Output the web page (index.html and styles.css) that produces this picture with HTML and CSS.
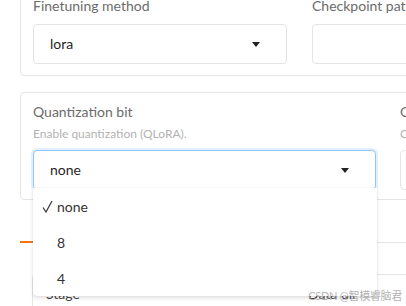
FILE: index.html
```html
<!DOCTYPE html>
<html lang="en">
<head>
    <meta charset="UTF-8">
    <meta name="viewport" content="width=device-width, initial-scale=1.0">
    <title>Quantization settings</title>
    <link rel="stylesheet" href="styles.css">
</head>
<body>
    <div id="page">
        <section class="panel panel-method">
            <div class="col col-method">
                <label class="lbl">Finetuning method</label>
                <div class="select"><span class="value">lora</span><i class="caret"></i></div>
            </div>
            <div class="col col-ckpt">
                <label class="lbl">Checkpoint path</label>
                <div class="select"></div>
            </div>
        </section>

        <section class="panel panel-quant">
            <div class="col col-bit">
                <label class="lbl">Quantization bit</label>
                <p class="info">Enable quantization (QLoRA).</p>
                <div class="select-wrap">
                    <div class="select focused"><span class="value">none</span><i class="caret"></i></div>
                    <ul class="options">
                        <li class="selected">
                            <span class="check"><svg width="11" height="13" viewBox="0 0 11 13"><path d="M1 7.5 L4 12 L10 1" fill="none" stroke="#333" stroke-width="1.2"/></svg></span>none
                        </li>
                        <li><span class="check"></span>8</li>
                        <li><span class="check"></span>4</li>
                    </ul>
                </div>
            </div>
            <div class="col col-qmethod">
                <label class="lbl">Quantization method</label>
                <p class="info">Quantization algorithm to use.</p>
                <div class="select"></div>
            </div>
        </section>

        <nav class="tabs">
            <button class="tab active">Train</button>
            <button class="tab">Evaluate &amp; Predict</button>
        </nav>

        <section class="panel panel-stage">
            <div class="col col-stage"><label class="lbl">Stage</label></div>
            <div class="col col-data"><label class="lbl">Data dir</label></div>
        </section>
    </div>
    <div id="marca">CSDN @智模睿脑君</div>
</body>
</html>
```
FILE: styles.css
```css
*{
    margin: 0;
    padding: 0;
    box-sizing: border-box;
}
:root{
    --borda:#e5e5e5;
    --rotulo:#6b6b6b;
    --dica:#b3b3b3;
    --texto:#1f1f1f;
    --laranja:#f97316;
    --foco:#93c5fd;
}
html, body{
    background-color: white;
    overflow: hidden;
    height: 100%;
}
body{
    font-family: Lato, "Noto Sans", sans-serif;
    font-size: 14px;
    color: var(--texto);
}
#page{
    width: 900px;
    margin-left: 20px;
    margin-top: -14px;
}
.panel{
    display: flex;
    border: 1px solid var(--borda);
    border-radius: 4px;
    padding: 9px 12px 11px;
    background-color: white;
}
.col{
    display: flex;
    flex-direction: column;
    flex: none;
}
.lbl{
    display: block;
    color: var(--rotulo);
    line-height: 20px;
}
.info{
    font-size: 12px;
    line-height: 16px;
    color: var(--dica);
    margin-top: 4px;
}
.panel-method .lbl{
    margin-bottom: 8px;
}
.col-method{
    width: 254px;
    margin-right: 25px;
}
.col-ckpt{
    width: 400px;
}
.panel-quant{
    margin-top: 16px;
    padding-bottom: 9px;
}
.panel-quant .info{
    margin-bottom: 8px;
}
.col-bit{
    width: 343px;
    margin-right: 24px;
}
.col-qmethod{
    width: 400px;
}
.select{
    display: flex;
    align-items: center;
    height: 40px;
    padding: 0 16px;
    border: 1px solid var(--borda);
    border-radius: 4px;
    background-color: white;
}
.select .value{
    flex: auto;
    line-height: 20px;
}
.caret{
    width: 0;
    height: 0;
    border-left: 4.5px solid transparent;
    border-right: 4.5px solid transparent;
    border-top: 5px solid #222;
    margin-right: 10px;
}
.select.focused{
    border-color: var(--foco);
    box-shadow: 0 0 0 2px rgba(191, 219, 254, 0.45);
}
.select-wrap{
    position: relative;
}
.options{
    position: absolute;
    left: 0;
    top: 38px;
    width: 344px;
    list-style: none;
    background-color: white;
    border-radius: 0 0 4px 4px;
    box-shadow: 0 2px 4px rgba(0, 0, 0, 0.12), 0 0 1px rgba(0, 0, 0, 0.15);
    z-index: 5;
}
.options li{
    display: flex;
    align-items: center;
    height: 36px;
    padding-left: 9px;
    color: #333;
    font-size: 14px;
}
.check{
    display: flex;
    align-items: center;
    width: 15px;
    flex: none;
}
.tabs{
    display: flex;
    margin-top: 8px;
    border-bottom: 1px solid var(--borda);
}
.tab{
    font: inherit;
    color: var(--rotulo);
    background: none;
    border: none;
    padding: 8px 14px;
    height: 35px;
    margin-bottom: -1px;
}
.tab.active{
    color: var(--texto);
    border-bottom: 2px solid var(--laranja);
}
.panel-stage{
    margin-top: 31px;
    margin-left: 12px;
    padding-left: 13px;
}
.col-stage{
    width: 262px;
}
.col-stage .lbl, .col-data .lbl{
    color: #444;
}
#marca{
    position: absolute;
    right: 4px;
    top: 289px;
    z-index: 10;
    white-space: nowrap;
    font-size: 11px;
    line-height: 14px;
    letter-spacing: -0.3px;
    color: rgba(160, 160, 160, 0.8);
    font-family: Lato, "Noto Sans CJK SC", sans-serif;
}
```
